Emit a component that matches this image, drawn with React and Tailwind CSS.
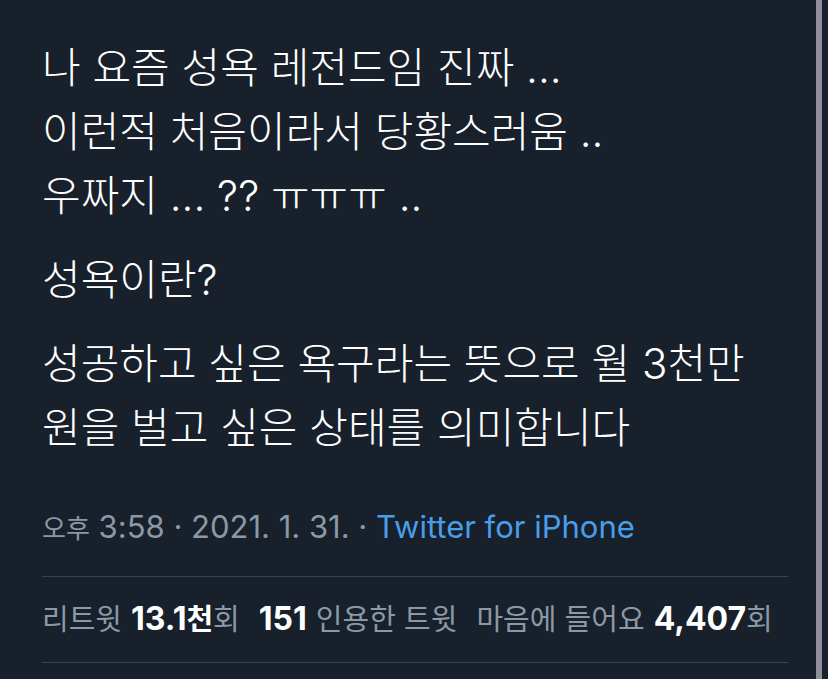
export default function App() {
  const K = ({ children }) => <span className="text-[26px]">{children}</span>;
  const S = ({ children }) => <span className="text-[29px]">{children}</span>;
  return (
    <div className="flex h-[679px] w-[828px] overflow-hidden bg-[#17202b] font-[Inter,'Noto_Sans_CJK_KR',sans-serif]">
      <div className="flex-1 pl-[42px] pr-[28px] pt-[36px]">
        <div className="whitespace-nowrap text-[42px] font-light leading-[64px] text-white">
          <div>나 요즘 성욕 레전드임 진짜 ...</div>
          <div>이런적 처음이라서 당황스러움 ..</div>
          <div>우짜지 ... ?? ㅠㅠㅠ ..</div>
        </div>
        <div className="mt-[20px] whitespace-nowrap text-[42px] font-light leading-[64px] text-white">
          <div>성욕이란?</div>
        </div>
        <div className="mt-[20px] whitespace-nowrap text-[42px] font-light leading-[64px] text-white">
          <div>성공하고 싶은 욕구라는 뜻으로 월 3천만</div>
          <div>원을 벌고 싶은 상태를 의미합니다</div>
        </div>
        <div className="mt-[47px] whitespace-nowrap text-[31px] leading-[40px] text-[#8b98a5]">
          <K>오후</K> 3:58 · 2021. 1. 31. · <span className="text-[#4a9ee8]">Twitter for iPhone</span>
        </div>
        <div className="mt-[27px] h-px bg-[#38414d]" />
        <div className="mt-[22px] flex items-baseline whitespace-nowrap text-[32px] leading-[40px] text-[#8b98a5]">
          <span>
            <S>리트윗</S>{" "}
            <span className="font-bold text-white">
              13.1<S>천</S>
            </span>
            <S>회</S>
          </span>
          <span className="ml-[19px]">
            <span className="font-bold text-white">151</span> <S>인용한 트윗</S>
          </span>
          <span className="ml-[19px]">
            <S>마음에 들어요</S> <span className="font-bold text-white">4,407</span>
            <S>회</S>
          </span>
        </div>
        <div className="mt-[22px] h-px bg-[#38414d]" />
      </div>
      <div className="w-[6px] bg-[#8d909b]" />
      <div className="w-[6px]" />
    </div>
  );
}
